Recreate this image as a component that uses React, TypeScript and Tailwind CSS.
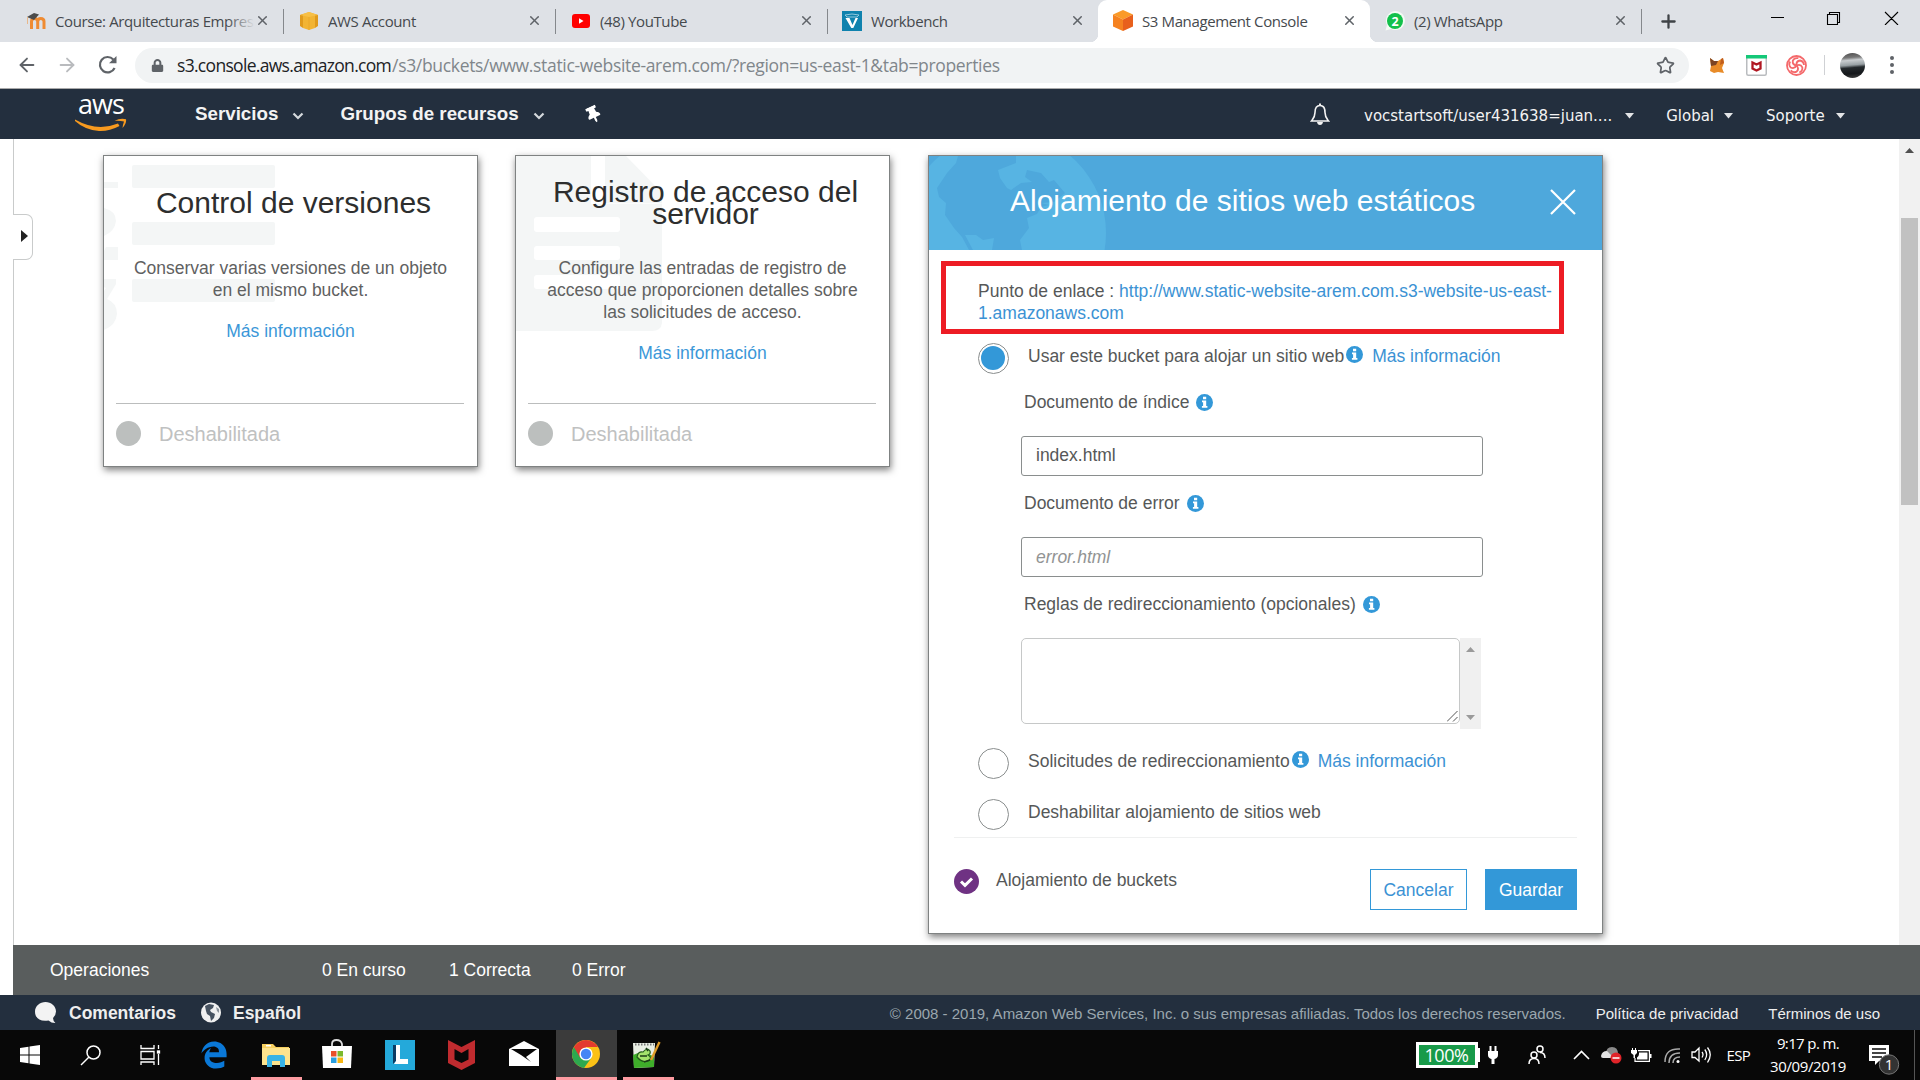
import React, { ReactNode } from 'react';
import { ArrowLeft, ArrowRight, RotateCw, Star, X, Plus } from 'lucide-react';
import { FaEdgeLegacy, FaLock, FaThumbtack } from 'react-icons/fa';

function MoodleIcon() {
  return (
    <svg width="20" height="18" viewBox="0 0 20 18">
      <path d="M5.500 17V9.500Q5.500 6.500 8.500 6.500Q11.700 6.500 11.700 9.500V17M11.700 9.500Q11.700 6.500 14.700 6.500Q18 6.500 18 9.500V17" fill="none" stroke="#ef8b32" strokeWidth="3" />
      <path d="M1 5L8 1L13 2.500L8 8Z" fill="#4b4b4b" />
      <path d="M1.500 5V12" stroke="#e9b88a" />
    </svg>
  );
}

function YellowBoxIcon() {
  return (
    <svg width="18" height="18" viewBox="0 0 18 18">
      <path d="M0 3L3 2V16L0 14ZM18 3L15 2V16L18 14Z" fill="#e09a1c" />
      <path d="M3 2L9 0L15 2V16L9 18L3 16Z" fill="#f2b433" />
      <path d="M0 3L9 5L18 3L9 0Z" fill="#f7bf45" />
      <path d="M9 5V18" stroke="#e8a628" strokeWidth=".8" />
    </svg>
  );
}

function YoutubeIcon() {
  return (
    <svg width="18" height="14" viewBox="0 0 18 14">
      <rect width="18" height="14" rx="3" fill="#f00" />
      <path d="M7 4.200L11.500 7L7 9.800Z" fill="#fff" />
    </svg>
  );
}

function WorkbenchIcon() {
  return (
    <svg width="20" height="20" viewBox="0 0 20 20">
      <rect width="20" height="20" fill="#0f82ae" />
      <path d="M3.500 7H7.500L10.500 14L13.500 7H16L11.300 17H9.300Z" fill="#fff" />
      <path d="M3 4Q10 2 17 4L15 6H5Z" fill="none" stroke="#9fd0e2" strokeWidth=".9" />
    </svg>
  );
}

function CubeIcon() {
  return (
    <svg width="20" height="21" viewBox="0 0 20 21">
      <path d="M10 0L20 4.500L10 9.500L0 4.500Z" fill="#fa9a28" />
      <path d="M0 4.500L10 9.500V21L0 16.500Z" fill="#f58220" />
      <path d="M20 4.500L10 9.500V21L20 16.500Z" fill="#e8601c" />
    </svg>
  );
}

function WhatsAppBadge() {
  return (
    <svg width="20" height="20" viewBox="0 0 20 20">
      <path d="M.500 19.500L2 14A9.500 9.500 0 1 1 6 18Z" fill="#f4fbf5" />
      <circle cx="10" cy="10" r="8" fill="#12c04b" />
      <text x="10" y="14.500" textAnchor="middle" fontSize="12.500" fontWeight="700" fontFamily="Open Sans, sans-serif" fill="#fff">2</text>
    </svg>
  );
}

function Tab({ icon, label, width, pl, active, fade }: { icon: ReactNode; label: string; width: string; pl: string; active?: boolean; fade?: boolean }) {
  return (
    <div className={`relative flex h-full shrink-0 items-center pb-px ${width} ${pl} ${active ? 'rounded-t-[9px] bg-white' : ''}`}>
      <span className="flex w-5 shrink-0 items-center justify-center">{icon}</span>
      <span className="relative ml-[9px] flex-1 overflow-hidden text-[15px] leading-5 tracking-[-0.38px] whitespace-nowrap text-[#45494d]">
        {label}
        {fade && <span className="absolute inset-y-0 right-0 w-7 bg-linear-to-r from-transparent to-[#dee1e6]" />}
      </span>
      <X size={15} strokeWidth={2.4} className="mr-[13px] shrink-0 text-[#5f6368]" />
      {active && (
        <>
          <span className="absolute bottom-0 -left-2 size-2 bg-[radial-gradient(circle_at_0_0,transparent_8px,white_8.5px)]" />
          <span className="absolute -right-2 bottom-0 size-2 bg-[radial-gradient(circle_at_100%_0,transparent_8px,white_8.5px)]" />
        </>
      )}
    </div>
  );
}

const Divider = () => <span className="h-[25px] w-px shrink-0 bg-[#85888c]" />;

function TabStrip() {
  return (
    <div className="flex h-[42px] items-center bg-[#dee1e6] font-['Open_Sans',sans-serif]">
      <Tab icon={<MoodleIcon />} label="Course: Arquitecturas Empres" width="w-[283px]" pl="pl-[26px]" fade />
      <Divider />
      <Tab icon={<YellowBoxIcon />} label="AWS Account" width="w-[271px]" pl="pl-[15px]" />
      <Divider />
      <Tab icon={<YoutubeIcon />} label="(48) YouTube" width="w-[271px]" pl="pl-[15px]" />
      <Divider />
      <Tab icon={<WorkbenchIcon />} label="Workbench" width="w-[270px]" pl="pl-[14px]" />
      <Tab icon={<CubeIcon />} label="S3 Management Console" width="w-[272px]" pl="pl-[15px]" active />
      <Tab icon={<WhatsAppBadge />} label="(2) WhatsApp" width="w-[271px]" pl="pl-[15px]" />
      <Divider />
      <Plus size={21} strokeWidth={2.6} className="ml-[16px] text-[#3f4347]" />
      <svg className="mb-[7px] ml-auto" width="128" height="14" viewBox="0 0 128 14" fill="none" stroke="#000" strokeWidth="1.100">
        <path d="M0 6.500H13M56.500 3.500H66.500V13.500H56.500ZM58.500 3V1.500H68.500V11.500H67M114 1L127 14M127 1L114 14" />
      </svg>
      <span className="w-[21px]" />
    </div>
  );
}

function Toolbar() {
  return (
    <div className="flex h-[47px] items-center border-b border-[#a9a9aa] bg-white font-['Open_Sans',sans-serif] text-[#5f6368]">
      <ArrowLeft size={22} strokeWidth={2} className="ml-4" />
      <ArrowRight size={22} strokeWidth={2} className="ml-[18px] text-[#b9bbbe]" />
      <svg className="ml-[20px]" width="20" height="20" viewBox="0 0 20 20">
        <path d="M16.600 13A7.700 7.700 0 1 1 15.300 4.500" fill="none" stroke="#5f6368" strokeWidth="2.200" />
        <path d="M18.500 1V8.300H11Z" fill="#5f6368" />
      </svg>
      <div className="ml-[17px] flex h-[35px] w-[1554px] items-center rounded-full bg-[#f1f3f4] pl-[16px]">
        <FaLock size={13} />
        <span className="ml-[13px] text-[17.5px] tracking-[-0.69px] whitespace-nowrap text-[#202124]">s3.console.aws.amazon.com</span>
        <span className="ml-px text-[17.5px] tracking-[-0.33px] whitespace-nowrap text-[#80868b]">/s3/buckets/www.static-website-arem.com/?region=us-east-1&amp;tab=properties</span>
        <Star size={19} strokeWidth={2.2} className="mr-[14px] ml-auto" />
      </div>
      <svg className="ml-[20px]" width="16" height="17" viewBox="0 0 16 17">
        <path d="M1 1L5 4H9L14 1L15 6L13 11L15 16L9 15L5 16L1 14L2 9Z" fill="#e88b28" />
        <path d="M1 1L5 4H9L7 8L2 9Z" fill="#7a4424" />
        <path d="M12 2L14 1L15 6L11 8Z" fill="#c05d1d" />
      </svg>
      <svg className="ml-[21px]" width="21" height="21" viewBox="0 0 21 21">
        <rect x=".750" y=".750" width="19.500" height="19.500" rx="1.500" fill="#fff" stroke="#b9bcbf" strokeWidth="1.500" />
        <rect width="21" height="3.500" fill="#14c878" />
        <path d="M6.500 7.500L10.500 9.500L14.500 7.500V13.500L10.500 15.500L6.500 13.500Z" fill="none" stroke="#b01722" strokeWidth="2.300" />
      </svg>
      <svg className="ml-[19px]" width="21" height="21" viewBox="0 0 21 21" fill="none" stroke="#f4696b" strokeWidth="1.800">
        <circle cx="10.500" cy="10.500" r="9.500" />
        {[0, 72, 144, 216, 288].map((a) => (
          <path key={a} transform={`rotate(${a} 10.5 10.5)`} d="M10.500 10.500Q10 6 14 5.500Q17.500 6 18 10" />
        ))}
      </svg>
      <span className="ml-[17px] h-5 w-px bg-[#cfd1d4]" />
      <span className="ml-[15px] size-[25px] rounded-full bg-[linear-gradient(175deg,#4b4b4b_0%,#777_20%,#c9cdd0_30%,#98a0a4_48%,#24292d_58%,#15181b_80%,#444_100%)]" />
      <span className="ml-[25px] flex flex-col gap-[3px]">
        <i className="size-1 rounded-full bg-[#5f6368]" />
        <i className="size-1 rounded-full bg-[#5f6368]" />
        <i className="size-1 rounded-full bg-[#5f6368]" />
      </span>
    </div>
  );
}

const Chevron = ({ className }: { className: string }) => (
  <svg className={className} width="12" height="8" viewBox="0 0 12 8">
    <path d="M1.500 1.500L6 6L10.500 1.500" fill="none" stroke="#d5d9dd" strokeWidth="2.200" />
  </svg>
);

const Caret = ({ className }: { className: string }) => (
  <svg className={className} width="9" height="6" viewBox="0 0 9 6">
    <path d="M0 0H9L4.500 5.500Z" fill="#e3e5e7" />
  </svg>
);

function AwsHeader() {
  return (
    <div className="flex h-[50px] items-center bg-[#232f3e] font-['Liberation_Sans',sans-serif] text-[#f3f3f3]">
      <div className="ml-[75px] flex h-[40px] w-[52px] flex-col items-center">
        <span className="mt-[-3px] h-[25px] font-['Open_Sans',sans-serif] text-[27px] leading-[26px] font-medium tracking-[-0.9px] text-white">aws</span>
        <svg className="mt-[2px] shrink-0" width="52" height="14" viewBox="0 0 52 14">
          <path d="M0 1.500Q22 14 43 5.500L44.500 8Q34 13.500 24 13Q10 12 0 3Z" fill="#f79a1f" />
          <path d="M39.500 2.800Q46 -.5 51 1.300Q51.800 5 47.500 10Q47.800 7 49 3.500Q45 2.500 39.500 2.800Z" fill="#f79a1f" />
        </svg>
      </div>
      <span className="mt-[-1px] ml-[68px] text-[18.75px] leading-[22px] font-bold">Servicios</span>
      <Chevron className="mt-[4px] ml-[14px]" />
      <span className="mt-[-1px] ml-[36px] text-[18.75px] leading-[22px] font-bold whitespace-nowrap">Grupos de recursos</span>
      <Chevron className="mt-[4px] ml-[14px]" />
      <FaThumbtack size={17} className="ml-[40px] -rotate-[25deg] text-white" />
      <svg className="ml-auto" width="20" height="22" viewBox="0 0 20 22">
        <path d="M10 2.500C5.500 2.500 5 6.500 5 9.500C5 14 3.500 15.500 1.500 18H18.500C16.500 15.500 15 14 15 9.500C15 6.500 14.500 2.500 10 2.500Z" fill="none" stroke="#f3f3f3" strokeWidth="1.600" />
        <path d="M7 19H13Q12.500 22 10 22T7 19ZM9 .5H11V3H9Z" fill="#f3f3f3" />
      </svg>
      <div className="mt-[3px] ml-[34px] flex w-[556px] items-center font-['DejaVu_Sans',sans-serif] text-[15px] leading-5">
        <span>vocstartsoft/user431638=juan....</span>
        <Caret className="ml-[13px]" />
        <span className="ml-[32px]">Global</span>
        <Caret className="ml-[10px]" />
        <span className="ml-[33px]">Soporte</span>
        <Caret className="ml-[11px]" />
      </div>
    </div>
  );
}

function VersionsArt() {
  return (
    <svg className="absolute top-0 left-0" width="180" height="190" viewBox="0 0 180 190" fill="#f4f6f6">
      <rect x="28" y="9" width="143" height="23" rx="2" />
      <rect x="28" y="66" width="143" height="23" rx="2" />
      <rect x="28" y="123" width="143" height="23" rx="2" />
      <path d="M0 26H14V32H0ZM0 52Q12 55 12 65Q11 75 0 80ZM2 91H14V104H0V95ZM0 123H12V128L3 143Q13 147 13 158Q12 169 0 174V135L2 132L0 131Z" />
    </svg>
  );
}

function LogArt() {
  return (
    <svg className="absolute top-0 left-0" width="150" height="176" viewBox="0 0 150 176">
      <path d="M0 0H110L146 37V167Q145 175 136 175H0Z" fill="#f4f6f6" />
      <path d="M75 0H89V48H75Z" fill="#fff" />
      <path d="M89 47H146V48H89Z" fill="#fbfcfc" />
      <g fill="#fff">
        <rect x="18" y="61" width="86" height="15" rx="3" />
        <rect x="18" y="90" width="86" height="14" rx="3" />
        <rect x="18" y="119" width="86" height="14" rx="3" />
      </g>
    </svg>
  );
}

function SmallCard({ title, lines, art }: { title: string[]; lines: string[]; art: ReactNode }) {
  return (
    <section className="relative flex h-[312px] w-[375px] flex-col border border-[#7f8282] bg-white text-center shadow-[1px_3px_7px_rgba(0,0,0,0.5)]">
      {art}
      <h2 className="relative flex h-[92px] flex-col justify-center pt-[2px] text-[30px] leading-[22px] text-[#2d2e2e]">
        {title.map((t) => <span key={t} className="pl-[6px]">{t}</span>)}
      </h2>
      <p className="relative mt-[9px] text-[17.5px] leading-[22px] text-[#5f6161]">
        {lines.map((l) => <span key={l} className="block">{l}</span>)}
      </p>
      <a className="relative mt-[19px] text-[17.5px] leading-[22px] text-[#3b97d8]">Más información</a>
      <div className="mt-auto mr-[13px] ml-3 flex h-[63px] items-center border-t border-[#bbbdbd] pb-[3px] text-left">
        <span className="size-[25px] rounded-full bg-[#bcbfbe]" />
        <span className="ml-[18px] text-[20px] leading-6 text-[#bfc1c1]">Deshabilitada</span>
      </div>
    </section>
  );
}

const Info = ({ className }: { className: string }) => (
  <svg className={className} width="17" height="17" viewBox="0 0 17 17">
    <circle cx="8.500" cy="8.500" r="8.500" fill="#3398d8" />
    <path d="M7 2.800H10.200V5.300H7ZM6 6.600H10.200V12H11.400V13.800H5.900V12H7.100V8.300H6Z" fill="#fff" />
  </svg>
);

function Radio({ checked }: { checked?: boolean }) {
  return (
    <span className="flex size-[31px] shrink-0 items-center justify-center rounded-full border border-[#8a8e8e] bg-white">
      {checked && <span className="mt-[-1px] ml-[-1px] size-[24px] rounded-full bg-[#3398d8]" />}
    </span>
  );
}

function HostingCard() {
  return (
    <section className="relative flex h-[779px] w-[675px] flex-col border border-[#7f8282] bg-white text-[17.5px] leading-[22px] text-[#565858] shadow-[1px_3px_7px_rgba(0,0,0,0.5)]">
      <header className="relative flex h-[94px] shrink-0 items-center bg-[#4ea8dc] text-white">
        <svg className="absolute top-0 left-0" width="180" height="94" viewBox="0 0 180 94">
          <circle cx="76" cy="77" r="101" fill="#57b4e3" />
          <path d="M29 0L27 7L18 17L8 32L10 41L17 47L16 59L25 72L33 81L40 94H44L36 79L47 79L54 84L65 82L63 94H93L91 84L100 72L98 62L108 58L112 51L120 49L112 47L125 46L136 37L125 24L120 26L112 17L98 14L96 21L103 26L92 27L82 34L78 32L71 22L69 14L87 7V0Z" fill="#4ea8dc" />
        </svg>
        <h2 className="relative mt-[-5px] ml-[81px] text-[30px] leading-[36px] whitespace-nowrap">Alojamiento de sitios web estáticos</h2>
        <svg className="mr-[26px] mb-[2px] ml-auto" width="26" height="26" viewBox="0 0 26 26">
          <path d="M1 1L25 25M25 1L1 25" stroke="#fff" strokeWidth="2.200" />
        </svg>
      </header>
      <div className="absolute top-[105px] left-[12px] h-[73px] w-[623px] border-[5px] border-[#ed1c24]" />
      <div className="mt-[30px] ml-[49px] w-[586px]">
        Punto de enlace : <a className="text-[#3b92d4]">http://www.static-website-arem.com.s3-website-us-east-<br />1.amazonaws.com</a>
      </div>
      <div className="mt-[19px] ml-[49px] flex h-[31px] items-start">
        <Radio checked />
        <span className="mt-[2px] ml-[19px]">Usar este bucket para alojar un sitio web</span>
        <Info className="mt-[3px] ml-[2px]" />
        <a className="mt-[2px] ml-[9px] text-[#3b92d4]">Más información</a>
      </div>
      <div className="mt-[17px] ml-[95px] flex h-[22px] items-center">
        Documento de índice <Info className="ml-[7px]" />
      </div>
      <div className="mt-[23px] ml-[92px] flex h-[40px] w-[462px] shrink-0 items-center rounded-[3px] border border-[#8a8e8e] pb-[2px] pl-[14px]">index.html</div>
      <div className="mt-[16px] ml-[95px] flex h-[22px] items-center">
        Documento de error <Info className="ml-[7px]" />
      </div>
      <div className="mt-[23px] ml-[92px] flex h-[40px] w-[462px] shrink-0 items-center rounded-[3px] border border-[#8a8e8e] pb-px pl-[14px] text-[#929494] italic">error.html</div>
      <div className="mt-[16px] ml-[95px] flex h-[22px] items-center">
        <span>Reglas de redireccionamiento (opcionales)</span> <Info className="ml-[7px]" />
      </div>
      <div className="mt-[23px] ml-[92px] flex h-[91px] items-start">
        <div className="flex h-[86px] w-[439px] items-end justify-end rounded-[5px] border border-[#c6c8c8] pr-px pb-px">
          <svg width="11" height="11" viewBox="0 0 11 11">
            <path d="M0 10.500L10.500 0M6 10.500L10.500 6" stroke="#555" strokeWidth="1" />
          </svg>
        </div>
        <div className="flex h-[91px] w-[21px] flex-col items-center justify-between bg-[#f0f0f0] pt-[9px] pb-[9px]">
          <svg width="9" height="5" viewBox="0 0 9 5"><path d="M0 5H9L4.500 0Z" fill="#9a9a9a" /></svg>
          <svg width="9" height="5" viewBox="0 0 9 5"><path d="M0 0H9L4.500 5Z" fill="#9a9a9a" /></svg>
        </div>
      </div>
      <div className="mt-[19px] ml-[49px] flex h-[31px] items-start">
        <Radio />
        <span className="mt-[2px] ml-[19px]">Solicitudes de redireccionamiento</span>
        <Info className="mt-[3px] ml-[2px]" />
        <a className="mt-[2px] ml-[9px] text-[#3b92d4]">Más información</a>
      </div>
      <div className="mt-[20px] ml-[49px] flex h-[31px] items-start">
        <Radio />
        <span className="mt-[2px] ml-[19px]">Deshabilitar alojamiento de sitios web</span>
      </div>
      <div className="mt-[7px] mr-[25px] ml-[25px] flex items-start border-t border-[#eff0f0] pt-[31px]">
        <svg width="25" height="25" viewBox="0 0 25 25">
          <circle cx="12.500" cy="12.500" r="12.500" fill="#6f3283" />
          <path d="M7 12.500L11 16.300L18 9.500" fill="none" stroke="#fff" strokeWidth="3" />
        </svg>
        <span className="ml-[17px]">Alojamiento de buckets</span>
        <span className="ml-auto flex h-[41px] w-[97px] items-center justify-center border border-[#3398d8] text-[#3b92d4]">Cancelar</span>
        <span className="ml-[18px] flex h-[41px] w-[92px] items-center justify-center bg-[#3398d8] text-white">Guardar</span>
      </div>
    </section>
  );
}

function Workspace() {
  return (
    <main className="flex h-[806px] bg-white">
      <div className="w-[14px] shrink-0 border-r border-[#c9cbcb] pt-[75px]">
        <div className="relative flex h-[46px] w-[20px] translate-x-[13px] items-center rounded-r-[7px] border border-l-0 border-[#c9cbcb] bg-white pb-[3px] pl-[8px]">
          <svg width="7" height="12" viewBox="0 0 7 12"><path d="M0 0L7 6L0 12Z" fill="#222" /></svg>
        </div>
      </div>
      <div className="ml-[89px] flex flex-1 items-start pt-4">
        <SmallCard title={['Control de versiones']} lines={['Conservar varias versiones de un objeto', 'en el mismo bucket.']} art={<VersionsArt />} />
        <span className="w-[37px]" />
        <SmallCard title={['Registro de acceso del', 'servidor']} lines={['Configure las entradas de registro de', 'acceso que proporcionen detalles sobre', 'las solicitudes de acceso.']} art={<LogArt />} />
        <span className="w-[38px]" />
        <HostingCard />
      </div>
      <div className="flex w-[21px] flex-col items-center bg-[#f1f1f1] pt-[9px]">
        <svg width="9" height="5" viewBox="0 0 9 5"><path d="M0 5H9L4.500 0Z" fill="#505050" /></svg>
        <span className="mt-[65px] h-[287px] w-[17px] bg-[#c1c1c1]" />
      </div>
    </main>
  );
}

function OperationsBar() {
  return (
    <div className="ml-[13px] flex h-[50px] items-center bg-[#595d5d] pl-[37px] text-[17.5px] leading-[22px] text-white">
      <span className="w-[272px]">Operaciones</span>
      <span className="w-[127px]">0 En curso</span>
      <span className="w-[123px]">1 Correcta</span>
      <span>0 Error</span>
    </div>
  );
}

function Footer() {
  return (
    <footer className="flex h-[35px] items-center bg-[#232f3e] text-[15px] leading-5 whitespace-nowrap text-[#eee]">
      <svg className="ml-[35px]" width="22" height="22" viewBox="0 0 22 22">
        <path d="M10.500 0C16 0 21 4 21 9.500Q21 13 18 16Q18 19 20.500 21Q16 21 13.500 18.500C5 20 0 16 0 9.500C0 4 5 0 10.500 0Z" fill="#f3f3f3" />
      </svg>
      <span className="ml-[12px] text-[17.5px] font-bold">Comentarios</span>
      <svg className="ml-[25px]" width="20" height="21" viewBox="0 0 20 21">
        <circle cx="10" cy="10.500" r="10" fill="#f0f0f0" />
        <path d="M4 4L8 2L13 3L12 6L9 8L10 10L14 12L13 16L10 19L9 14L6 12L5 9Z" fill="#465260" />
        <path d="M15 5L18 7L18 11L16 9Z" fill="#8a929a" />
      </svg>
      <span className="ml-[12px] text-[17.5px] font-bold">Español</span>
      <span className="mt-[2px] ml-auto text-[#9ba7ae]">© 2008 - 2019, Amazon Web Services, Inc. o sus empresas afiliadas. Todos los derechos reservados.</span>
      <span className="mt-[2px] ml-[30px]">Política de privacidad</span>
      <span className="mt-[2px] mr-[40px] ml-[30px]">Términos de uso</span>
    </footer>
  );
}

function Pinned({ width, open, active, children }: { width: string; open?: boolean; active?: boolean; children: ReactNode }) {
  return (
    <div className={`flex h-full shrink-0 flex-col ${width} ${active ? 'bg-[#3b3b3b]' : ''}`}>
      <div className="flex flex-1 items-center justify-center pt-[3px]">{children}</div>
      <div className={`h-[3px] ${open ? 'bg-[#fd9ba1]' : ''}`} />
    </div>
  );
}

function Taskbar() {
  return (
    <div className="flex h-[50px] items-center bg-[#080808] font-['Open_Sans',sans-serif] text-[15px] text-white">
      <Pinned width="w-[60px]">
        <svg width="20" height="20" viewBox="0 0 20 20" fill="#fff"><path d="M0 3L8.500 1.700V9.500H0ZM9.500 1.500L20 0V9.500H9.500ZM0 10.500H8.500V18.300L0 17ZM9.500 10.500H20V20L9.500 18.500Z" /></svg>
      </Pinned>
      <Pinned width="w-[60px]">
        <svg width="21" height="21" viewBox="0 0 21 21" fill="none" stroke="#fff" strokeWidth="1.500"><circle cx="13.500" cy="7.500" r="6.500" /><path d="M9 12L1 20" /></svg>
      </Pinned>
      <Pinned width="w-[60px]">
        <svg width="21" height="20" viewBox="0 0 21 20" fill="none" stroke="#fff" strokeWidth="1.300"><path d="M1 0V3.500H14V0M1 6.500H14V14H1ZM1 20V17H14V20M18.500 0V4M18.500 9V20" /><rect x="17.500" y="6" width="2" height="2" fill="#fff" /></svg>
      </Pinned>
      <Pinned width="w-[68px]"><FaEdgeLegacy size={28} className="text-[#0a78d7]" /></Pinned>
      <div className="w-[3px]" />
      <Pinned width="w-[51px]" open>
        <svg className="mr-[2px]" width="28" height="24" viewBox="0 0 28 24">
          <path d="M0 1H11L14 4H27V22H0Z" fill="#f6cf5f" /><path d="M0 5H28V22H0Z" fill="#fde38d" /><path d="M4 2H9V3.500H4Z" fill="#fff" />
          <path d="M5 24V15Q5 12 8 12H20Q23 12 23 15V24H18V18H10V24Z" fill="#38b3e6" />
        </svg>
      </Pinned>
      <Pinned width="w-[71px]">
        <svg className="mr-px mb-[3px]" width="30" height="30" viewBox="0 0 30 30">
          <path d="M10 9V5Q10 1 14.500 1T20 5V9" fill="none" stroke="#ddd" strokeWidth="1.800" /><path d="M0 7H30L29 29H1Z" fill="#fff" />
          <path d="M9 12H14.500V17.500H9Z" fill="#e9502a" /><path d="M15.500 12H21V17.500H15.500Z" fill="#7cb92c" /><path d="M9 18.500H14.500V24H9Z" fill="#2a9fe0" /><path d="M15.500 18.500H21V24H15.500Z" fill="#f8b714" />
        </svg>
      </Pinned>
      <Pinned width="w-[54px]">
        <svg width="30" height="30" viewBox="0 0 30 30"><rect width="30" height="30" fill="#24a9da" /><path d="M8 5V24L12 20V5Z" fill="#0b3b62" /><path d="M11 5H15V19H23V24H9L11 21Z" fill="#fff" /></svg>
      </Pinned>
      <Pinned width="w-[69px]">
        <svg width="27" height="30" viewBox="0 0 27 30"><path d="M0 0L13.500 7L27 0V23L13.500 30L0 23Z" fill="#c02b2f" /><path d="M6.500 9L13.500 13L20.500 9V19.500L13.500 23L6.500 19.500Z" fill="#080808" /></svg>
      </Pinned>
      <Pinned width="w-[58px]">
        <svg className="mr-[2px] mb-[3px]" width="30" height="25" viewBox="0 0 30 25"><path d="M0 8L15 0L30 8V25H0Z" fill="#fff" /><path d="M2 8H28L17 16L22 21L12 14Z" fill="#080808" /></svg>
      </Pinned>
      <div className="w-[2px]" />
      <Pinned width="w-[61px]" open active>
        <svg className="mr-[2px] mb-[2px]" width="28" height="28" viewBox="0 0 28 28">
          <circle cx="14" cy="14" r="14" fill="#fbc116" /><path d="M14 14L1.900 7A14 14 0 0 0 12 27.900L20 17Z" fill="#2da94f" /><path d="M14 14V7H26.100A14 14 0 0 0 1.900 7L8 17.500Z" fill="#e33b2e" />
          <circle cx="14" cy="14" r="6.600" fill="#fff" /><circle cx="14" cy="14" r="5.200" fill="#4385f5" />
        </svg>
      </Pinned>
      <div className="w-[6px]" />
      <Pinned width="w-[51px]" open>
        <svg className="mr-[3px]" width="28" height="28" viewBox="0 0 28 28">
          <path d="M0 2H22L21 26L1 27Z" fill="#e9efe4" /><path d="M0 14Q10 8 21 16L21 26L1 27Z" fill="#3fae2a" />
          <path d="M4 16Q5 10 10 11Q14 6 17 10Q18 13 15 14Q20 17 15 20Q9 22 4 16Z" fill="#a4e36c" stroke="#235c1b" strokeWidth="1.200" /><path d="M7 15H14M13 7L15 10M11 21L17 19" stroke="#1c3d19" strokeWidth="1.500" />
          <path d="M2 3.500H21" stroke="#777" strokeWidth="2" strokeDasharray="1.500 1.500" /><path d="M26.500 1L18 19" stroke="#e09c28" strokeWidth="2.400" />
        </svg>
      </Pinned>
      <div className="ml-auto flex h-[26px] w-[62px] items-center justify-center border-[3px] border-white bg-[#179a49] text-[18px] tracking-[-0.4px]">100%</div>
      <span className="h-[14px] w-[2px] bg-white" />
      <svg className="ml-[7px]" width="12" height="18" viewBox="0 0 12 18" fill="#fff"><path d="M2.500 0H4.500V5H7.500V0H9.500V5H11V9Q11 12 7.500 13V18H4.500V13Q1 12 1 9V5H2.500Z" /></svg>
      <svg className="ml-[29px]" width="18" height="20" viewBox="0 0 18 20" fill="none" stroke="#fff" strokeWidth="1.500"><circle cx="12" cy="4" r="3" /><circle cx="6" cy="10" r="3" /><path d="M1 19Q1 13.500 6 13.500T11 19M12 7.500Q17 7.500 17 13" /></svg>
      <svg className="ml-[27px]" width="17" height="10" viewBox="0 0 17 10" fill="none" stroke="#fff" strokeWidth="1.600"><path d="M1 9L8.500 1.500L16 9" /></svg>
      <svg className="ml-[11px]" width="21" height="18" viewBox="0 0 21 18">
        <path d="M5 8Q5 1 11 1Q17 1 17 8L12 12H6Z" fill="#8a8a8a" /><path d="M0 10Q1 5 6 5L13 12H2Q0 12 0 10Z" fill="#e3e3e3" />
        <circle cx="15" cy="12" r="5.500" fill="#e02429" /><path d="M11.500 12H18.500" stroke="#fff" strokeWidth="1.500" />
      </svg>
      <svg className="ml-[9px]" width="21" height="15" viewBox="0 0 21 15"><path d="M7 2.600H18.400V13.400H4V10" fill="none" stroke="#fff" strokeWidth="1.200" /><path d="M8 4.500H16.500V11.500H6V9.500Q8 8 8 6ZM19 6H20.500V10H19ZM0 2H6V5L4 7V10H2.500V7L0 5ZM1 0H2V2H1ZM4 0H5V2H4Z" fill="#fff" /></svg>
      <svg className="ml-[12px]" width="17" height="17" viewBox="0 0 17 17" fill="none" stroke="#a9a9a9" strokeWidth="1.500"><path d="M1 15Q1 1 16 2M5 16Q5 6 16 6M9 16Q9 10 16 10" /><circle cx="14" cy="14.500" r="1.500" fill="#fff" stroke="none" /></svg>
      <svg className="ml-[10px]" width="21" height="18" viewBox="0 0 21 18" fill="none" stroke="#fff" strokeWidth="1.300"><path d="M1 6H4L8 2V15L4 11.500H1ZM11 6Q13 8.500 11 11.500M13.800 3.500Q17.500 8.500 13.800 14M16.500 1.500Q22 8.500 16.500 16.500" /></svg>
      <span className="ml-[15px] tracking-[-0.7px]">ESP</span>
      <div className="ml-[18px] flex w-[80px] flex-col items-center gap-[2px] leading-[21px]">
        <span className="tracking-[-0.62px]">9:17 p. m.</span>
        <span className="tracking-[-0.38px]">30/09/2019</span>
      </div>
      <svg className="mt-[10px] ml-[21px]" width="31" height="30" viewBox="0 0 31 30">
        <path d="M0 0H20V16H10L6 20V16H0Z" fill="#fff" /><path d="M3 4H17M3 8H17M3 12H13" stroke="#080808" strokeWidth="1.300" />
        <circle cx="20" cy="19.500" r="9.700" fill="#333" stroke="#777" />
        <text x="20" y="25" textAnchor="middle" fontSize="15" fontFamily="Open Sans, sans-serif" fill="#fff">1</text>
      </svg>
      <span className="ml-[14px] h-full w-px bg-[#555]" />
      <span className="w-[5px]" />
    </div>
  );
}

export default function App() {
  return (
    <div className="flex h-[1080px] w-[1920px] flex-col overflow-hidden bg-white font-['Liberation_Sans',Arial,sans-serif]">
      <TabStrip />
      <Toolbar />
      <AwsHeader />
      <Workspace />
      <OperationsBar />
      <Footer />
      <Taskbar />
    </div>
  );
}
